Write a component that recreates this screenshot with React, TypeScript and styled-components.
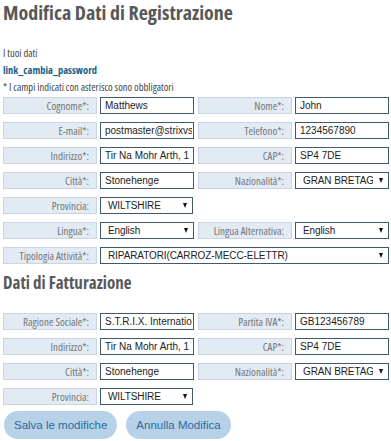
import React from "react";
import styled, { createGlobalStyle } from "styled-components";

const Global = createGlobalStyle`
  html, body { margin: 0; padding: 0; background: #fff; }
  body { font-family: "Liberation Sans", Arial, sans-serif; }
`;

const Page = styled.div`
  width: 391px;
  padding: 0 3px;
  box-sizing: border-box;
`;

const Title = styled.h1`
  margin: 0;
  font-family: "Open Sans", sans-serif;
  font-stretch: 75%;
  font-weight: bold;
  font-size: 20px;
  line-height: 25px;
  color: #585858;
`;

const SubTitle = styled(Title)`
  font-size: 17px;
  line-height: 22px;
  margin-top: 8px;
`;

const Small = styled.div<{ $bold?: boolean; $blue?: boolean; $mt?: number }>`
  font-family: "Open Sans", sans-serif;
  font-stretch: 75%;
  font-size: 10.5px;
  line-height: 17px;
  margin-top: ${(p) => p.$mt ?? 0}px;
  color: ${(p) => (p.$blue ? "#1b5f8c" : "#444")};
  font-weight: ${(p) => (p.$bold ? "bold" : "normal")};
`;

const Rows = styled.div<{ $mt: number }>`
  display: flex;
  flex-direction: column;
  gap: 8px;
  margin-top: ${(p) => p.$mt}px;
`;

const Row = styled.div`
  display: grid;
  grid-template-columns: 191px 191px;
  column-gap: 4px;
`;

const Field = styled.div<{ $wide?: boolean }>`
  display: grid;
  grid-template-columns: 94px 1fr;
  column-gap: 3px;
  grid-column: ${(p) => (p.$wide ? "1 / span 2" : "auto")};
`;

const Label = styled.div`
  height: 17px;
  box-sizing: border-box;
  background: #e2ebf4;
  border: 1px solid #c9d6e2;
  text-align: right;
  padding-right: 7px;
  font-family: "Open Sans", sans-serif;
  font-stretch: 75%;
  font-size: 11px;
  line-height: 15px;
  color: #757575;
  white-space: nowrap;
`;

const Input = styled.input`
  display: block;
  height: 17px;
  width: 100%;
  box-sizing: border-box;
  border: 1px solid #3e5a6c;
  border-radius: 0;
  padding: 0 1px 0 4px;
  font-family: "Liberation Sans", Arial, sans-serif;
  font-size: 10px;
  color: #222;
  background: #fff;
  outline: none;
`;

const SelectWrap = styled.div<{ $w?: number }>`
  position: relative;
  height: 17px;
  width: ${(p) => (p.$w ? `${p.$w}px` : "100%")};
`;

const Select = styled.select`
  display: block;
  appearance: none;
  -webkit-appearance: none;
  height: 17px;
  width: 100%;
  box-sizing: border-box;
  border: 1px solid #3e5a6c;
  border-radius: 0;
  padding: 0 15px 0 7px;
  font-family: "Liberation Sans", Arial, sans-serif;
  font-size: 10px;
  letter-spacing: -0.1px;
  color: #222;
  background: #fff;
  outline: none;
`;

const Arrow = styled.span`
  position: absolute;
  right: 6px;
  top: 6px;
  width: 0;
  height: 0;
  border-left: 2.5px solid transparent;
  border-right: 2.5px solid transparent;
  border-top: 5px solid #111;
  pointer-events: none;
`;

const Buttons = styled.div`
  display: flex;
  gap: 9px;
  margin-top: 6px;
  padding-left: 1px;
`;

const Button = styled.button`
  height: 28px;
  border: none;
  border-radius: 14px;
  background: #b7d2e8;
  color: #2c6a9c;
  font-family: "Liberation Sans", Arial, sans-serif;
  font-size: 11.5px;
  padding: 0 10px;
`;

type F = { label: string; value: string; select?: boolean; selW?: number; wide?: boolean };

const FieldView = ({ label, value, select, selW, wide }: F) => (
  <Field $wide={wide}>
    <Label>{label}</Label>
    {select ? (
      <SelectWrap $w={selW}>
        <Select defaultValue={value}>
          <option>{value}</option>
        </Select>
        <Arrow />
      </SelectWrap>
    ) : (
      <Input defaultValue={value} />
    )}
  </Field>
);

export default function App() {
  return (
    <Page>
      <Global />
      <Title>Modifica Dati di Registrazione</Title>
      <Small $mt={20}>I tuoi dati</Small>
      <Small $bold $blue>link_cambia_password</Small>
      <Small>* I campi indicati con asterisco sono obbligatori</Small>
      <Rows $mt={1}>
        <Row>
          <FieldView label="Cognome*:" value="Matthews" />
          <FieldView label="Nome*:" value="John" />
        </Row>
        <Row>
          <FieldView label="E-mail*:" value="postmaster@strixvservices.com" />
          <FieldView label="Telefono*:" value="1234567890" />
        </Row>
        <Row>
          <FieldView label="Indirizzo*:" value="Tir Na Mohr Arth, 1" />
          <FieldView label="CAP*:" value="SP4 7DE" />
        </Row>
        <Row>
          <FieldView label="Città*:" value="Stonehenge" />
          <FieldView label="Nazionalità*:" value="GRAN BRETAGNA" select />
        </Row>
        <Row>
          <FieldView label="Provincia:" value="WILTSHIRE" select selW={93} />
        </Row>
        <Row>
          <FieldView label="Lingua*:" value="English" select />
          <FieldView label="Lingua Alternativa:" value="English" select />
        </Row>
        <Row>
          <FieldView label="Tipologia Attività*:" value="RIPARATORI(CARROZ-MECC-ELETTR)" select wide />
        </Row>
      </Rows>
      <SubTitle>Dati di Fatturazione</SubTitle>
      <Rows $mt={19}>
        <Row>
          <FieldView label="Ragione Sociale*:" value="S.T.R.I.X. International Ltd" />
          <FieldView label="Partita IVA*:" value="GB123456789" />
        </Row>
        <Row>
          <FieldView label="Indirizzo*:" value="Tir Na Mohr Arth, 1" />
          <FieldView label="CAP*:" value="SP4 7DE" />
        </Row>
        <Row>
          <FieldView label="Città*:" value="Stonehenge" />
          <FieldView label="Nazionalità*:" value="GRAN BRETAGNA" select />
        </Row>
        <Row>
          <FieldView label="Provincia:" value="WILTSHIRE" select selW={93} />
        </Row>
      </Rows>
      <Buttons>
        <Button>Salva le modifiche</Button>
        <Button>Annulla Modifica</Button>
      </Buttons>
    </Page>
  );
}
